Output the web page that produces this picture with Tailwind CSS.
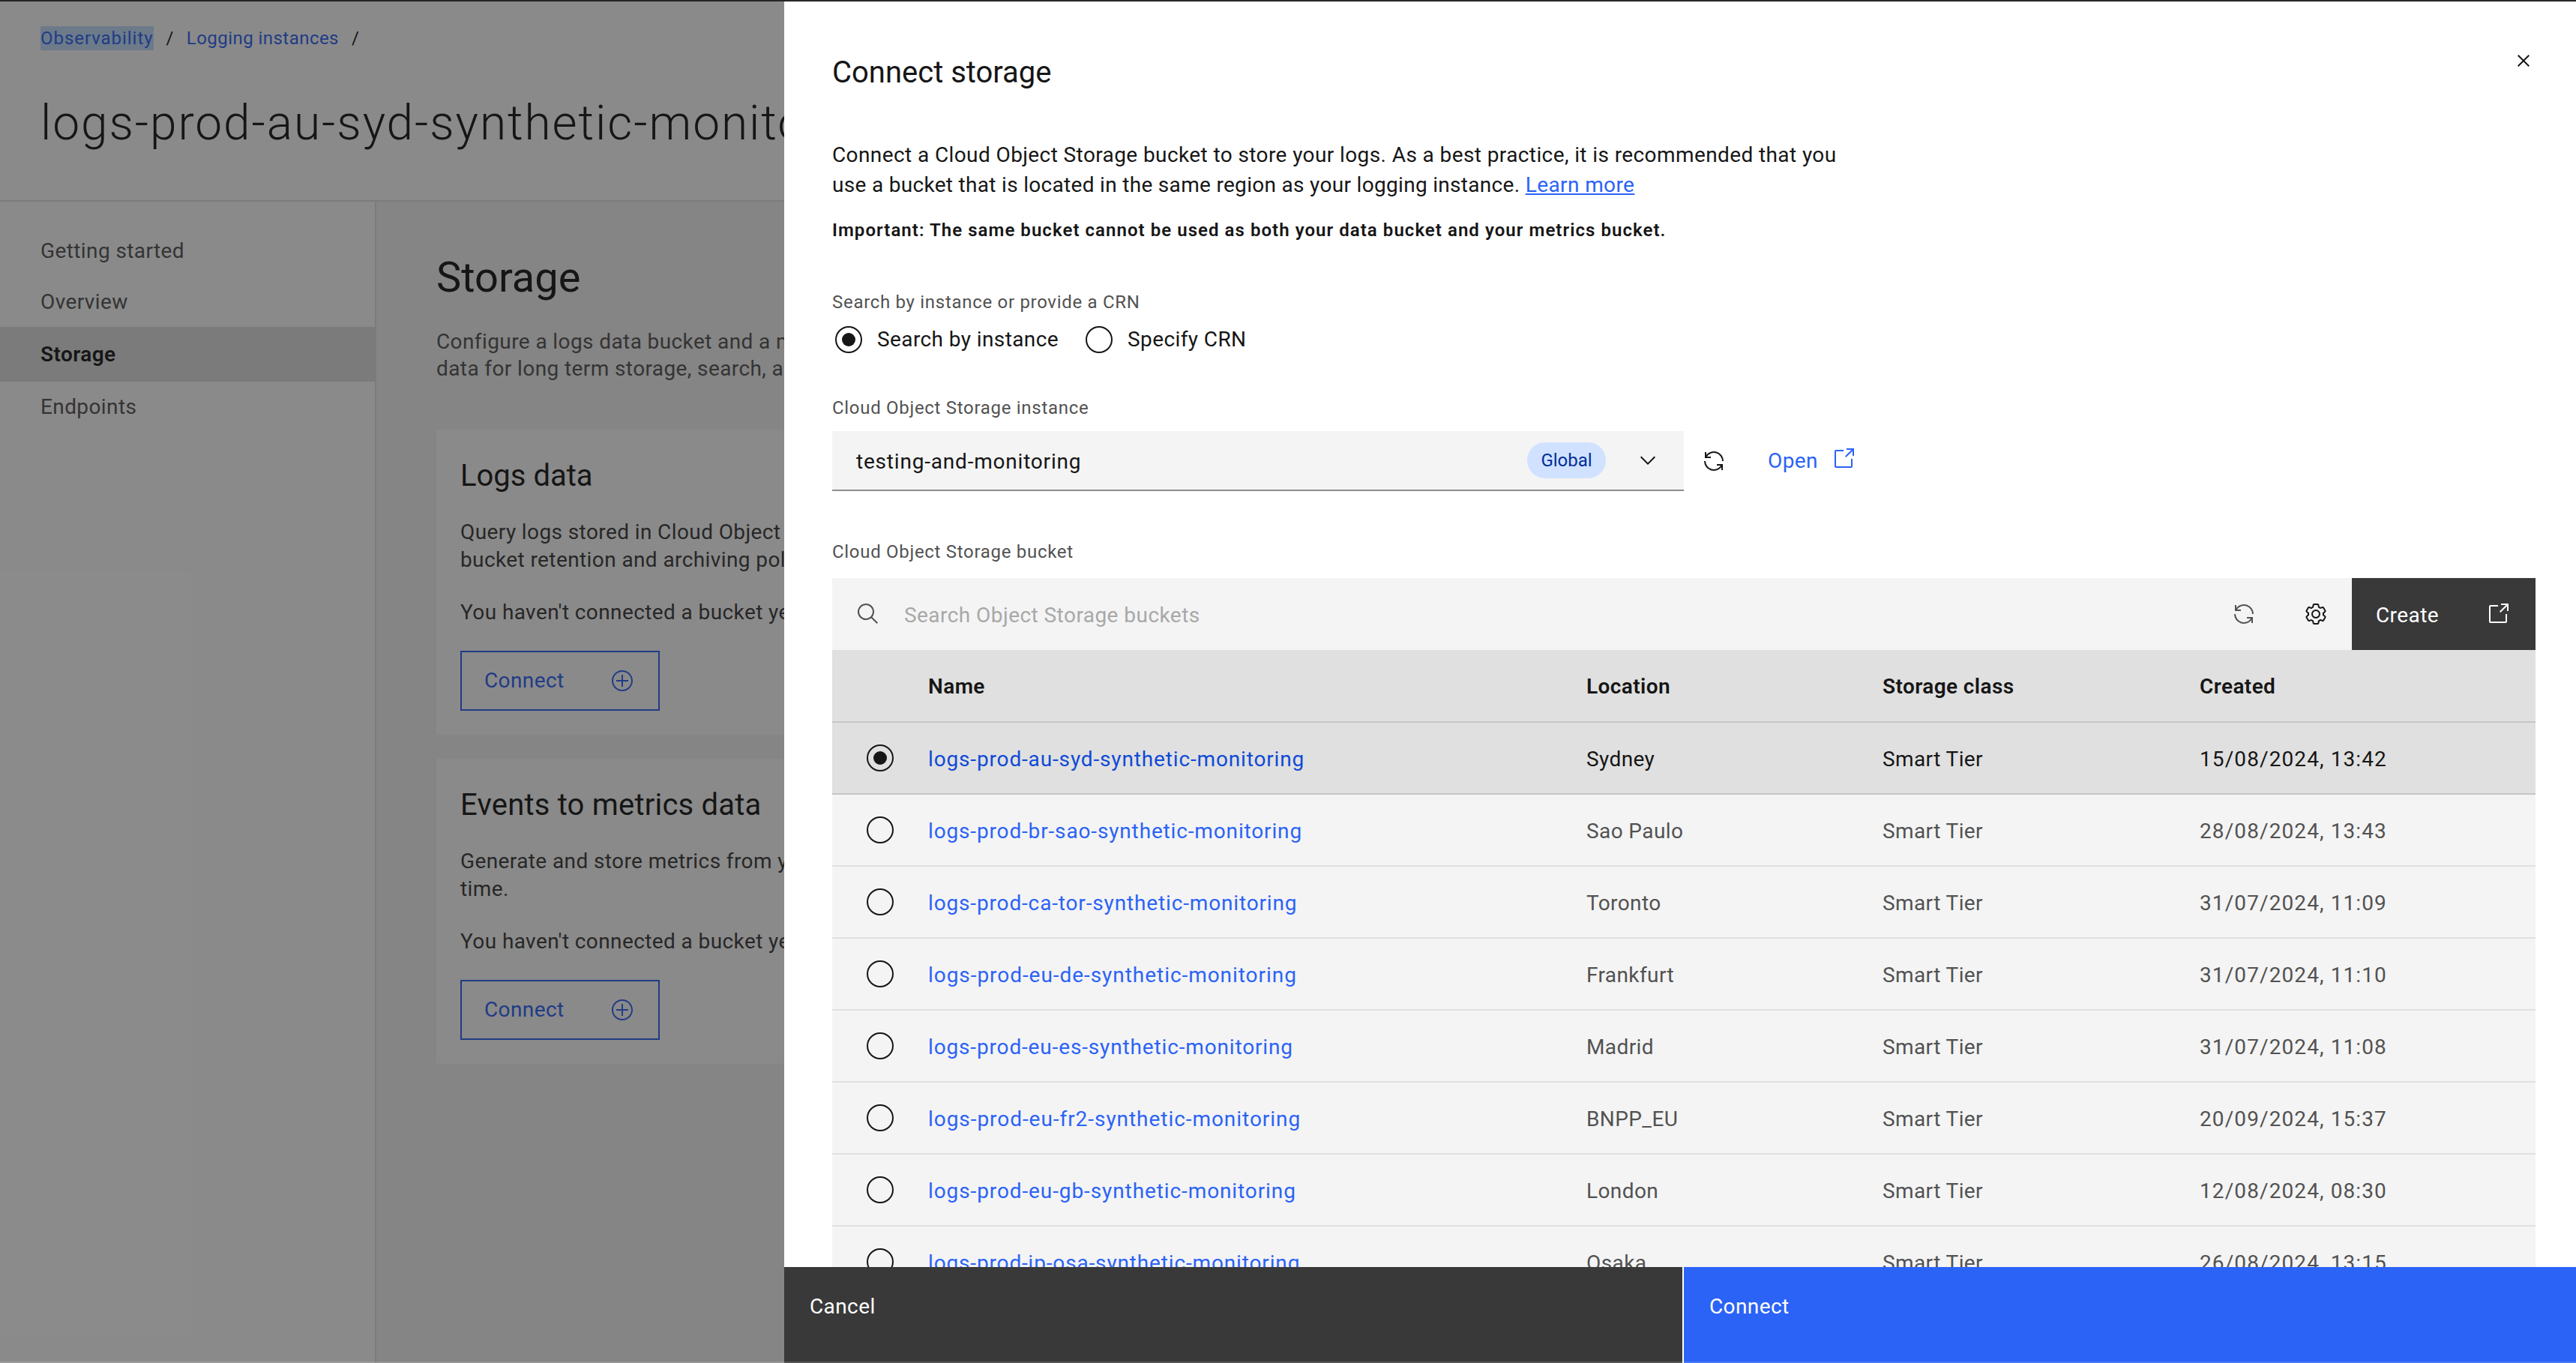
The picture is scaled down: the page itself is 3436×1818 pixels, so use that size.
<!DOCTYPE html>
<html lang="en">
<head>
    <meta charset="UTF-8">
    <meta name="viewport" content="width=device-width, initial-scale=1.0">
    <title>Connect storage</title>
    <script src="https://cdn.jsdelivr.net/npm/@tailwindcss/browser@4"></script>
</head>
<body class="relative h-screen w-screen overflow-hidden bg-white font-['Roboto',sans-serif] tracking-[0.4px] text-[#161616]">

    <!-- Page behind the side panel -->
    <div class="flex h-full flex-col">
        <header class="h-[269px] shrink-0 border-b-2 border-[#e0e0e0] pl-[54px]">
            <nav class="mt-[34px] flex h-[32px] items-center pt-[1px] text-[24px] leading-[32px] tracking-[0.45px]">
                <a class="bg-[#c2deff] tracking-[0.95px] text-[#2b63f6]">Observability</a>
                <span class="mx-[17px]">/</span>
                <a class="text-[#2b63f6]">Logging instances</a>
                <span class="mx-[17px]">/</span>
            </nav>
            <h1 class="mt-[59px] whitespace-nowrap text-[64px] font-light leading-[80px] tracking-[1.9px]">logs-prod-au-syd-synthetic-monitoring</h1>
        </header>
        <div class="flex flex-1">
            <!-- Sidebar -->
            <aside class="w-[502px] shrink-0 border-r-2 border-[#e0e0e0] pt-[31px] text-[28px] text-[#525252]">
                <div class="flex h-[70px] items-center pl-[54px]">Getting started</div>
                <div class="flex h-[66px] items-center pl-[54px]">Overview</div>
                <div class="flex h-[73px] items-center bg-[#e0e0e0] pl-[54px] font-semibold text-[#161616]">Storage</div>
                <div class="flex h-[68px] items-center pl-[54px]">Endpoints</div>
            </aside>
            <!-- Main -->
            <main class="flex-1 bg-[#f4f4f4] pl-[80px] pt-[65px]">
                <h2 class="text-[56px] leading-[72px] tracking-normal">Storage</h2>
                <p class="mt-[32px] whitespace-nowrap text-[28px] leading-[36px] text-[#525252]">Configure a logs data bucket and a metrics data bucket to store your<br>data for long term storage, search, and analysis.</p>
                <section class="mt-[63px] h-[407px] w-[1400px] bg-white pl-[32px] pt-[32px]">
                    <h3 class="text-[40px] leading-[60px] tracking-normal">Logs data</h3>
                    <p class="mt-[26px] whitespace-nowrap text-[28px] leading-[37px] text-[#393939]">Query logs stored in Cloud Object Storage and configure the<br>bucket retention and archiving policies.</p>
                    <p class="mt-[33px] whitespace-nowrap text-[28px] leading-[37px] text-[#393939]">You haven't connected a bucket yet.</p>
                    <button class="mt-[33px] flex h-[80px] w-[266px] items-center justify-between border-2 border-[#2b63f6] pl-[30px] pr-[32px] text-[28px] text-[#2b63f6]">
                        Connect
                        <svg class="h-[32px] w-[32px]" viewBox="0 0 32 32" fill="currentColor"><path d="M16,4c6.6,0,12,5.4,12,12s-5.4,12-12,12S4,22.6,4,16S9.4,4,16,4 M16,2C8.3,2,2,8.3,2,16s6.3,14,14,14s14-6.3,14-14S23.7,2,16,2z"/><path d="M24 15H17V8H15V15H8V17H15V24H17V17H24V15Z"/></svg>
                    </button>
                </section>
                <section class="mt-[32px] h-[407px] w-[1400px] bg-white pl-[32px] pt-[32px]">
                    <h3 class="text-[40px] leading-[60px] tracking-[0.2px]">Events to metrics data</h3>
                    <p class="mt-[26px] whitespace-nowrap text-[28px] leading-[37px] text-[#393939]">Generate and store metrics from your logs to track trends over<br>time.</p>
                    <p class="mt-[33px] whitespace-nowrap text-[28px] leading-[37px] text-[#393939]">You haven't connected a bucket yet.</p>
                    <button class="mt-[33px] flex h-[80px] w-[266px] items-center justify-between border-2 border-[#2b63f6] pl-[30px] pr-[32px] text-[28px] text-[#2b63f6]">
                        Connect
                        <svg class="h-[32px] w-[32px]" viewBox="0 0 32 32" fill="currentColor"><path d="M16,4c6.6,0,12,5.4,12,12s-5.4,12-12,12S4,22.6,4,16S9.4,4,16,4 M16,2C8.3,2,2,8.3,2,16s6.3,14,14,14s14-6.3,14-14S23.7,2,16,2z"/><path d="M24 15H17V8H15V15H8V17H15V24H17V17H24V15Z"/></svg>
                    </button>
                </section>
            </main>
        </div>
    </div>

    <!-- Modal overlay -->
    <div class="absolute inset-0 bg-[#161616]/50"></div>

    <!-- Side panel -->
    <div class="absolute inset-y-0 right-0 flex w-[2390px] flex-col bg-white">
        <div class="relative min-h-0 flex-1 overflow-hidden pl-[64px] pr-[54px] pt-[73px]">
            <button class="absolute right-[54px] top-[65px]">
                <svg class="h-[32px] w-[32px]" viewBox="0 0 32 32" fill="#161616"><path d="M24 9.4L22.6 8 16 14.6 9.4 8 8 9.4 14.6 16 8 22.6 9.4 24 16 17.4 22.6 24 24 22.6 17.4 16 24 9.4z"/></svg>
            </button>
            <h2 class="text-[40px] leading-[48px] tracking-normal">Connect storage</h2>
            <p class="mt-[66px] text-[28px] leading-[40px]">Connect a Cloud Object Storage bucket to store your logs. As a best practice, it is recommended that you<br><span class="tracking-[0.31px]">use a bucket that is located in the same region as your logging instance. </span><a class="text-[#2b63f6] underline">Learn more</a></p>
            <p class="mt-[24px] text-[24px] font-semibold leading-[32px] tracking-[1.05px]">Important: The same bucket cannot be used as both your data bucket and your metrics bucket.</p>

            <div class="mt-[64px] text-[24px] leading-[32px] tracking-[0.7px] text-[#525252]">Search by instance or provide a CRN</div>
            <div class="mt-[14px] flex h-[40px] items-center text-[28px]">
                <span class="ml-[4px] flex h-[36px] w-[36px] items-center justify-center rounded-full border-2 border-[#161616]"><span class="h-[18px] w-[18px] rounded-full bg-[#161616]"></span></span>
                <span class="ml-[20px]">Search by instance</span>
                <span class="ml-[36px] h-[36px] w-[36px] rounded-full border-2 border-[#161616]"></span>
                <span class="ml-[20px]">Specify CRN</span>
            </div>

            <div class="mt-[55px] text-[24px] leading-[32px] tracking-[0.7px] text-[#525252]">Cloud Object Storage instance</div>
            <div class="mt-[15px] flex items-center">
                <div class="flex h-[80px] w-[1136px] items-center border-b-2 border-[#8d8d8d] bg-[#f4f4f4] pl-[32px] text-[28px]">
                    <span class="flex-1 pt-[3px] tracking-[0.8px]">testing-and-monitoring</span>
                    <span class="flex h-[48px] w-[105px] items-center justify-center rounded-full bg-[#d0e2ff] text-[24px] tracking-normal text-[#002d9c]">Global</span>
                    <svg class="ml-[40px] mr-[32px] h-[32px] w-[32px]" viewBox="0 0 32 32" fill="#161616"><path d="M16 22L6 12l1.4-1.4 8.6 8.6 8.6-8.6L26 12z"/></svg>
                </div>
                <svg class="ml-[24px] h-[32px] w-[32px]" viewBox="0 0 32 32" fill="#161616"><path d="M12 10H6.78A11 11 0 0 1 27 16h2A13 13 0 0 0 6 7.68V4H4v8h8zM20 22h5.22A11 11 0 0 1 5 16H3a13 13 0 0 0 23 8.32V28h2v-8h-8z"/></svg>
                <a class="ml-[56px] flex items-center text-[28px] text-[#2b63f6]">
                    Open
                    <svg class="mb-[6px] ml-[18px] h-[32px] w-[32px]" viewBox="0 0 32 32" fill="currentColor"><path d="M26,28H6a2.0027,2.0027,0,0,1-2-2V6A2.0027,2.0027,0,0,1,6,4H16V6H6V26H26V16h2V26A2.0027,2.0027,0,0,1,26,28Z"/><polygon points="20 2 20 4 26.586 4 18 12.586 19.414 14 28 5.414 28 12 30 12 30 2 20 2"/></svg>
                </a>
            </div>

            <div class="mt-[65px] text-[24px] leading-[32px] tracking-[0.7px] text-[#525252]">Cloud Object Storage bucket</div>

            <!-- Toolbar -->
            <div class="mt-[19px] flex h-[96px] items-center bg-[#f4f4f4] text-[28px]">
                <svg class="ml-[32px] h-[32px] w-[32px]" viewBox="0 0 32 32" fill="#525252"><path d="M29,27.5859l-7.5521-7.5521a11.0177,11.0177,0,1,0-1.4141,1.4141L27.5859,29ZM4,13a9,9,0,1,1,9,9A9.01,9.01,0,0,1,4,13Z"/></svg>
                <span class="ml-[32px] flex-1 pt-[3px] tracking-[0.45px] text-[#a8a8a8]">Search Object Storage buckets</span>
                <svg class="h-[32px] w-[32px]" viewBox="0 0 32 32" fill="#525252"><path d="M12 10H6.78A11 11 0 0 1 27 16h2A13 13 0 0 0 6 7.68V4H4v8h8zM20 22h5.22A11 11 0 0 1 5 16H3a13 13 0 0 0 23 8.32V28h2v-8h-8z"/></svg>
                <svg class="ml-[64px] mr-[32px] h-[32px] w-[32px]" viewBox="0 0 32 32" fill="#161616"><path d="M27,16.76c0-.25,0-.5,0-.76s0-.51,0-.77l1.92-1.68A2,2,0,0,0,29.3,11L26.94,7a2,2,0,0,0-1.73-1,2,2,0,0,0-.64.1l-2.43.82a11.35,11.35,0,0,0-1.31-.75l-.51-2.52a2,2,0,0,0-2-1.61H13.64a2,2,0,0,0-2,1.61l-.51,2.52a11.48,11.48,0,0,0-1.32.75L7.43,6A2,2,0,0,0,6.79,6,2,2,0,0,0,5.06,7L2.7,11a2,2,0,0,0,.41,2.51L5,15.24c0,.25,0,.5,0,.76s0,.51,0,.77L3.11,18.45A2,2,0,0,0,2.7,21L5.06,25a2,2,0,0,0,1.73,1,2,2,0,0,0,.64-.1l2.43-.82a11.35,11.35,0,0,0,1.31.75l.51,2.52a2,2,0,0,0,2,1.61h4.72a2,2,0,0,0,2-1.61l.51-2.52a11.48,11.48,0,0,0,1.32-.75l2.42.82a2,2,0,0,0,.64.1,2,2,0,0,0,1.73-1L29.3,21a2,2,0,0,0-.41-2.51ZM25.21,24l-3.43-1.16a8.86,8.86,0,0,1-2.71,1.57L18.36,28H13.64l-.71-3.55a9.36,9.36,0,0,1-2.7-1.57L6.79,24,4.43,20l2.72-2.4a8.9,8.9,0,0,1,0-3.13L4.43,12,6.79,8l3.43,1.16a8.86,8.86,0,0,1,2.71-1.57L13.64,4h4.72l.71,3.55a9.36,9.36,0,0,1,2.7,1.57L25.21,8,27.57,12l-2.72,2.4a8.9,8.9,0,0,1,0,3.13L27.57,20Z"/><path d="M16,22a6,6,0,1,1,6-6A5.94,5.94,0,0,1,16,22Zm0-10a3.91,3.91,0,0,0-4,4,3.91,3.91,0,0,0,4,4,3.91,3.91,0,0,0,4-4A3.91,3.91,0,0,0,16,12Z"/></svg>
                <button class="flex h-[96px] w-[245px] items-center justify-between bg-[#393939] pl-[32px] pr-[34px] text-white">
                    <span class="pt-[3px]">Create</span>
                    <svg class="h-[32px] w-[32px]" viewBox="0 0 32 32" fill="currentColor"><path d="M26,28H6a2.0027,2.0027,0,0,1-2-2V6A2.0027,2.0027,0,0,1,6,4H16V6H6V26H26V16h2V26A2.0027,2.0027,0,0,1,26,28Z"/><polygon points="20 2 20 4 26.586 4 18 12.586 19.414 14 28 5.414 28 12 30 12 30 2 20 2"/></svg>
                </button>
            </div>

            <!-- Table -->
            <div class="text-[28px]">
                <div class="grid h-[97px] grid-cols-[128px_878px_395px_423px_1fr] items-center border-b-2 border-[#c6c6c6] bg-[#e0e0e0] pt-[3px] font-semibold">
                    <span></span><span>Name</span><span>Location</span><span>Storage class</span><span>Created</span>
                </div>
                <div class="grid h-[96px] grid-cols-[128px_878px_395px_423px_1fr] items-center border-b-2 border-[#c6c6c6] bg-[#e0e0e0] pt-[3px]">
                    <span class="mb-[3px] ml-[46px] flex h-[36px] w-[36px] items-center justify-center rounded-full border-2 border-[#161616]"><span class="h-[18px] w-[18px] rounded-full bg-[#161616]"></span></span>
                    <a class="tracking-[0.85px] text-[#0f4ad6]">logs-prod-au-syd-synthetic-monitoring</a><span>Sydney</span><span>Smart Tier</span><span class="tracking-[1.1px]">15/08/2024, 13:42</span>
                </div>
                <div class="grid h-[96px] grid-cols-[128px_878px_395px_423px_1fr] items-center border-b-2 border-[#e0e0e0] bg-[#f4f4f4] pt-[3px] text-[#525252]">
                    <span class="mb-[3px] ml-[46px] h-[36px] w-[36px] rounded-full border-2 border-[#161616]"></span>
                    <a class="tracking-[0.85px] text-[#2b63f6]">logs-prod-br-sao-synthetic-monitoring</a><span>Sao Paulo</span><span>Smart Tier</span><span class="tracking-[1.1px]">28/08/2024, 13:43</span>
                </div>
                <div class="grid h-[96px] grid-cols-[128px_878px_395px_423px_1fr] items-center border-b-2 border-[#e0e0e0] bg-[#f4f4f4] pt-[3px] text-[#525252]">
                    <span class="mb-[3px] ml-[46px] h-[36px] w-[36px] rounded-full border-2 border-[#161616]"></span>
                    <a class="tracking-[0.85px] text-[#2b63f6]">logs-prod-ca-tor-synthetic-monitoring</a><span>Toronto</span><span>Smart Tier</span><span class="tracking-[1.1px]">31/07/2024, 11:09</span>
                </div>
                <div class="grid h-[96px] grid-cols-[128px_878px_395px_423px_1fr] items-center border-b-2 border-[#e0e0e0] bg-[#f4f4f4] pt-[3px] text-[#525252]">
                    <span class="mb-[3px] ml-[46px] h-[36px] w-[36px] rounded-full border-2 border-[#161616]"></span>
                    <a class="tracking-[0.95px] text-[#2b63f6]">logs-prod-eu-de-synthetic-monitoring</a><span>Frankfurt</span><span>Smart Tier</span><span class="tracking-[1.1px]">31/07/2024, 11:10</span>
                </div>
                <div class="grid h-[96px] grid-cols-[128px_878px_395px_423px_1fr] items-center border-b-2 border-[#e0e0e0] bg-[#f4f4f4] pt-[3px] text-[#525252]">
                    <span class="mb-[3px] ml-[46px] h-[36px] w-[36px] rounded-full border-2 border-[#161616]"></span>
                    <a class="tracking-[0.85px] text-[#2b63f6]">logs-prod-eu-es-synthetic-monitoring</a><span>Madrid</span><span>Smart Tier</span><span class="tracking-[1.1px]">31/07/2024, 11:08</span>
                </div>
                <div class="grid h-[96px] grid-cols-[128px_878px_395px_423px_1fr] items-center border-b-2 border-[#e0e0e0] bg-[#f4f4f4] pt-[3px] text-[#525252]">
                    <span class="mb-[3px] ml-[46px] h-[36px] w-[36px] rounded-full border-2 border-[#161616]"></span>
                    <a class="tracking-[0.95px] text-[#2b63f6]">logs-prod-eu-fr2-synthetic-monitoring</a><span>BNPP_EU</span><span>Smart Tier</span><span class="tracking-[1.1px]">20/09/2024, 15:37</span>
                </div>
                <div class="grid h-[96px] grid-cols-[128px_878px_395px_423px_1fr] items-center border-b-2 border-[#e0e0e0] bg-[#f4f4f4] pt-[3px] text-[#525252]">
                    <span class="mb-[3px] ml-[46px] h-[36px] w-[36px] rounded-full border-2 border-[#161616]"></span>
                    <a class="tracking-[0.9px] text-[#2b63f6]">logs-prod-eu-gb-synthetic-monitoring</a><span>London</span><span>Smart Tier</span><span class="tracking-[1.1px]">12/08/2024, 08:30</span>
                </div>
                <div class="grid h-[96px] grid-cols-[128px_878px_395px_423px_1fr] items-center border-b-2 border-[#e0e0e0] bg-[#f4f4f4] pt-[3px] text-[#525252]">
                    <span class="mb-[3px] ml-[46px] h-[36px] w-[36px] rounded-full border-2 border-[#161616]"></span>
                    <a class="tracking-[0.85px] text-[#2b63f6]">logs-prod-jp-osa-synthetic-monitoring</a><span>Osaka</span><span>Smart Tier</span><span class="tracking-[1.1px]">26/08/2024, 13:15</span>
                </div>
            </div>
        </div>

        <!-- Footer buttons -->
        <div class="flex h-[128px] shrink-0 gap-[2px] text-[28px] text-white">
            <button class="flex w-[1198px] items-start bg-[#393939] pl-[34px] pt-[32px]">Cancel</button>
            <button class="flex flex-1 items-start bg-[#2b63f6] pl-[34px] pt-[32px]">Connect</button>
        </div>
    </div>

    <!-- Window edges -->
    <div class="absolute inset-x-0 top-0 h-[2px] bg-[#262626]"></div>
    <div class="absolute inset-x-0 bottom-0 h-[2px] bg-white/15"></div>
</body>
</html>
